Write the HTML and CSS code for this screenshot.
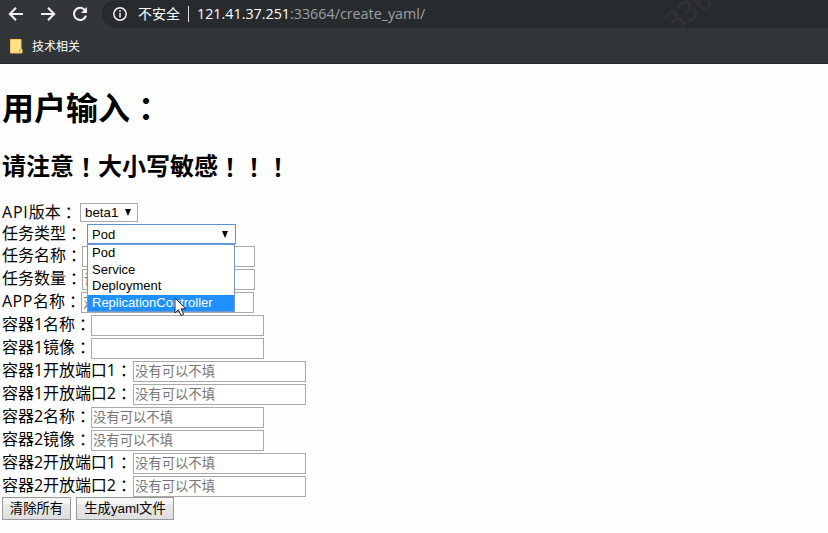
FILE: index.html
```html
<!DOCTYPE html>
<html lang="zh-CN">
<head>
<meta charset="utf-8">
<title>create_yaml</title>
<link rel="stylesheet" href="styles.css">
</head>
<body>
<header class="browser">
  <div class="toolbar">
    <nav class="nav">
      <svg width="16" height="16" viewBox="0 0 16 16"><path d="M15 8H2M8 1.8L1.8 8L8 14.2"/></svg>
      <svg width="16" height="16" viewBox="0 0 16 16"><path d="M1 8h13M8 1.8L14.2 8L8 14.2"/></svg>
      <svg width="16" height="16" viewBox="0 0 16 16"><path d="M13.2 4.5A6.1 6.1 0 1 0 14 9.6"/><path class="solid" d="M15 1v6H9z"/></svg>
    </nav>
    <div class="address">
      <svg class="info" width="16" height="16" viewBox="0 0 16 16"><circle cx="8" cy="8" r="6.2"/><path d="M8 7v4.5M8 4.3v1.8"/></svg>
      <span class="insecure">不安全</span>
      <span class="divider"></span>
      <span class="url"><b>121.41.37.251</b>:33664/create_yaml/</span>
      <svg class="watermark" width="60" height="28" viewBox="0 0 60 28"><text transform="translate(15 34) rotate(-38)">336</text></svg>
    </div>
  </div>
  <div class="bookmarks">
    <svg width="13" height="15" viewBox="0 0 13 15"><path d="M.5.5h10.5v9.5h1v4H.5z" fill="#ffe08a" stroke="#f2cb54"/><path d="M9.5 14v-3.5H12" fill="none" stroke="#d9ad35"/></svg>
    <span>技术相关</span>
  </div>
</header>
<main>
  <h1>用户输入<span class="mark" lang="zh-TW">：</span></h1>
  <h2>请注意<span class="mark" lang="zh-TW">！</span>大小写敏感<span class="mark" lang="zh-TW">！！！</span></h2>
  <form>
    <div class="row api"><label><span class="latin">API</span>版本<span class="mark" lang="zh-TW">：</span></label><div class="select">beta1<span class="arrow"></span></div></div>
    <div class="row kind"><label>任务类型<span class="mark" lang="zh-TW">：</span></label>
      <div class="select open">Pod<span class="arrow"></span>
        <ul class="menu"><li>Pod</li><li>Service</li><li>Deployment</li><li class="active">ReplicationController</li></ul>
        <svg class="cursor" width="13" height="20" viewBox="0 0 13 20"><path d="M1 1v15l3.5-3.3L7 18.5l2.7-1.1-2.5-5.6H12z" fill="#fff" stroke="#222b3c"/></svg>
      </div>
    </div>
    <div class="row task"><label>任务名称<span class="mark" lang="zh-TW">：</span></label><input></div>
    <div class="row task"><label>任务数量<span class="mark" lang="zh-TW">：</span></label><input placeholder="请输入数字"></div>
    <div class="row app"><label><span class="latin">APP</span>名称<span class="mark" lang="zh-TW">：</span></label><input placeholder="对应名称"></div>
    <div class="row box"><label>容器1名称<span class="mark" lang="zh-TW">：</span></label><input></div>
    <div class="row box"><label>容器1镜像<span class="mark" lang="zh-TW">：</span></label><input></div>
    <div class="row port"><label>容器1开放端口1<span class="mark" lang="zh-TW">：</span></label><input placeholder="没有可以不填"></div>
    <div class="row port"><label>容器1开放端口2<span class="mark" lang="zh-TW">：</span></label><input placeholder="没有可以不填"></div>
    <div class="row box"><label>容器2名称<span class="mark" lang="zh-TW">：</span></label><input placeholder="没有可以不填"></div>
    <div class="row box"><label>容器2镜像<span class="mark" lang="zh-TW">：</span></label><input placeholder="没有可以不填"></div>
    <div class="row port"><label>容器2开放端口1<span class="mark" lang="zh-TW">：</span></label><input placeholder="没有可以不填"></div>
    <div class="row port"><label>容器2开放端口2<span class="mark" lang="zh-TW">：</span></label><input placeholder="没有可以不填"></div>
    <div class="actions"><button type="button" class="clear">清除所有</button><button type="button" class="create">生成yaml文件</button></div>
  </form>
</main>
</body>
</html>
```
FILE: styles.css
```css
* { box-sizing: border-box; }
body { margin: 0; height: 533px; overflow: hidden; background: #fefefe; color: #000; font: 16px/22px "Open Sans", "Noto Sans CJK SC", sans-serif; }
.browser { height: 64px; background: #333639; border-bottom: 1px solid #25282a; color: #fff; }
.toolbar { display: flex; height: 28px; }
.nav { display: flex; gap: 16px; width: 102px; padding: 6px 0 0 8px; flex: none; }
.nav svg, .info { fill: none; stroke: #f1f3f4; stroke-width: 2; flex: none; }
.nav .solid { fill: #f1f3f4; stroke: none; }
.address { position: relative; display: flex; align-items: center; flex: 1; height: 28px; padding-left: 10px; background: #282b2e; border-radius: 14px 0 0 14px; }
.info { stroke-width: 1.5; }
.insecure { margin-left: 10px; width: 43px; font-size: 14px; white-space: nowrap; }
.divider { width: 1px; height: 16px; margin: 0 8px 0 7px; background: #d8dadc; }
.url { color: #9aa0a6; font-size: 14.3px; white-space: nowrap; }
.url b { color: #fff; font-weight: 400; }
.watermark { position: absolute; left: 558px; top: 0; fill: #303336; font-size: 29px; }
.bookmarks { display: flex; height: 35px; align-items: center; gap: 9px; padding: 1px 0 0 10px; font-size: 12px; }
.bookmarks span { padding-top: 2px; }
.mark { position: relative; top: 1px; font-family: "Noto Sans CJK TC", sans-serif; line-height: 1; }
.latin { letter-spacing: .5px; }
main { padding: 0 2px; }
h1 { margin: 21px 0 0; font-size: 32px; line-height: 46px; height: 46px; }
h2 { margin: 19px 0 0; font-size: 24px; line-height: 32px; height: 32px; }
form { margin-top: 20px; }
.row { display: flex; height: 23px; white-space: nowrap; }
.row label { flex: none; height: 22px; line-height: 19px; }
.api, .kind { height: 22px; }
.api { padding-top: 1px; }
.api label { width: 78px; line-height: 17px; }
.api .latin { letter-spacing: .8px; }
.kind label { width: 85px; line-height: 18px; }
.task label { width: 80px; }
.app label { width: 79px; }
.box label { width: 89px; }
.port label { width: 131px; }
.box label, .port label { letter-spacing: -.05px; }
input { width: 173px; height: 21px; margin: 0; padding: 0 1px; border: 1px solid #a9a9a9; border-radius: 0; background: #fff; font: 13.333px/18px "Liberation Sans", "Noto Sans CJK SC", sans-serif; }
input::placeholder { color: #757575; opacity: 1; }
.select { position: relative; width: 58px; height: 19px; padding-left: 4px; border: 1px solid #a9a9a9; background: #fff; font: 13.333px/18px "Liberation Sans", sans-serif; }
.arrow { position: absolute; right: 6px; top: 5px; border: 3.5px solid transparent; border-top: 7px solid #000; border-bottom: 0; }
.open { width: 149px; height: 20px; border: 1px solid #5f8fd3; line-height: 19px; font-size: 13px; }
.open .arrow { top: 6px; right: 7px; }
.menu { position: absolute; z-index: 2; left: -1px; top: 19px; width: 148px; height: 68px; margin: 0; padding: 0; list-style: none; background: #fff; border: 1px solid #7197d0; }
.menu li { height: 16.5px; padding-left: 4px; line-height: 16px; }
.menu .active { background: #1e90ff; color: #fff; }
.cursor { position: absolute; z-index: 3; left: 86px; top: 72px; }
.actions { display: flex; gap: 5px; margin-top: -2px; }
button { height: 23px; margin: 0; padding: 1px 0 0; border: 1px solid #999; border-radius: 0; background: linear-gradient(#f6f6f6 0 30%, #e9e9e9 30%, #dedede); color: #000; font: 13.333px/20px "Liberation Sans", "Noto Sans CJK SC", sans-serif; white-space: nowrap; }
.clear { width: 69px; }
.create { width: 98px; }
```
